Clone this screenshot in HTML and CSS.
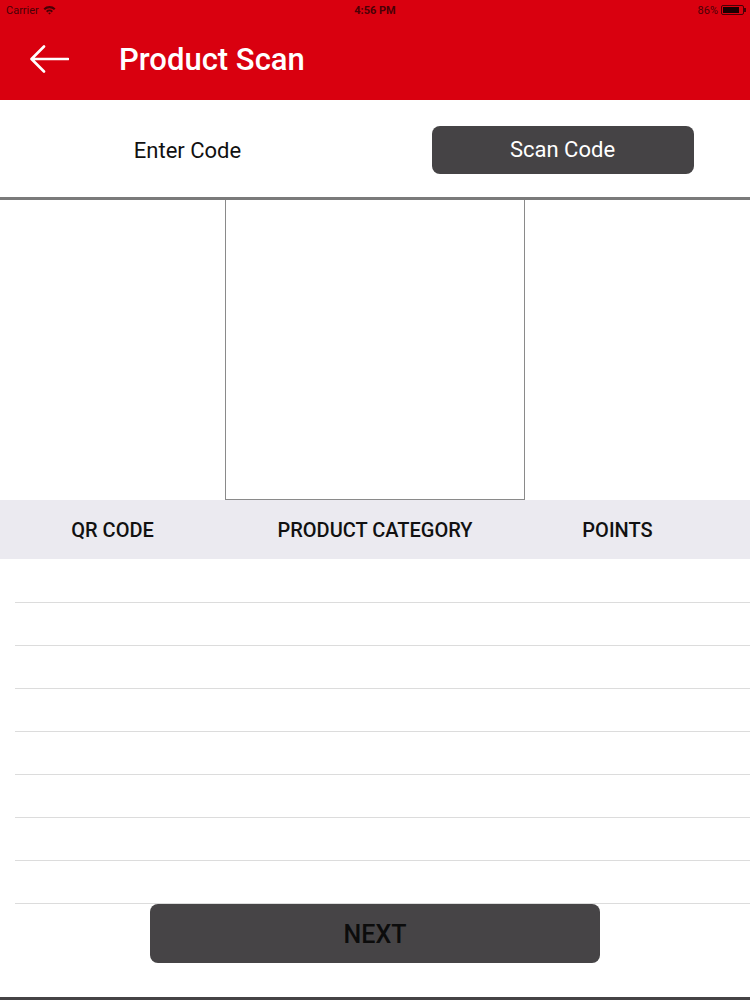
FILE: index.html
```html
<!DOCTYPE html>
<html lang="en">
<head>
    <meta charset="UTF-8">
    <meta name="viewport" content="width=device-width, initial-scale=1.0">
    <title>Product Scan</title>
    <link rel="stylesheet" href="styles.css">
</head>
<body>
    <div class="screen">
        <div class="status-bar">
            <div class="carrier">Carrier
                <svg width="13" height="10" viewBox="0 0 13 10">
                    <path d="M0.5 3.5 A8.5 8.5 0 0 1 12.5 3.5 L11 5 A6.4 6.4 0 0 0 2 5 Z" fill="#4a0006"/>
                    <path d="M3 6 A5 5 0 0 1 10 6 L8.6 7.4 A3 3 0 0 0 4.4 7.4 Z" fill="#4a0006"/>
                    <path d="M5.2 8.2 A1.8 1.8 0 0 1 7.8 8.2 L6.5 9.6 Z" fill="#4a0006"/>
                </svg>
            </div>
            <div class="time">4:56 PM</div>
            <div class="battery">86%
                <span class="battery-icon"><span class="battery-level"></span></span>
            </div>
        </div>

        <div class="navbar">
            <button class="back" aria-label="Back">
                <svg width="40" height="30" viewBox="0 0 40 30">
                    <path d="M39 15 H3 M15 2.5 L2.5 15 L15 27.5" fill="none" stroke="#fff" stroke-width="2.6" stroke-linecap="round" stroke-linejoin="round"/>
                </svg>
            </button>
            <h1>Product Scan</h1>
        </div>

        <div class="segment">
            <div class="segment-item">Enter Code</div>
            <div class="segment-item"><span class="segment-active">Scan Code</span></div>
        </div>

        <div class="scanner-area">
            <div class="scanner"></div>
        </div>

        <div class="table-head">
            <div>QR CODE</div>
            <div>PRODUCT CATEGORY</div>
            <div>POINTS</div>
        </div>

        <div class="rows">
            <div class="row"></div>
            <div class="row"></div>
            <div class="row"></div>
            <div class="row"></div>
            <div class="row"></div>
            <div class="row"></div>
            <div class="row"></div>
            <div class="row"></div>
        </div>

        <div class="footer">
            <button class="next">NEXT</button>
        </div>
    </div>
</body>
</html>
```

FILE: styles.css
```css
* { box-sizing: border-box; }
body {
    margin: 0;
    font-family: Roboto, "Liberation Sans", sans-serif;
    background: #fff;
}
.screen {
    width: 750px;
    height: 1000px;
    display: flex;
    flex-direction: column;
}
.status-bar {
    height: 20px;
    background: #d9000f;
    color: #4a0006;
    font-size: 11px;
    display: grid;
    grid-template-columns: 1fr auto 1fr;
    align-items: center;
    padding: 0 6px;
}
.carrier {
    display: flex;
    align-items: center;
    gap: 4px;
}
.time { font-weight: 700; }
.battery {
    display: flex;
    align-items: center;
    justify-content: flex-end;
    gap: 3px;
}
.battery-icon {
    width: 23px;
    height: 10px;
    border: 1px solid #4a0006;
    border-radius: 2px;
    padding: 1px;
    display: flex;
    position: relative;
}
.battery-icon::after {
    content: "";
    position: absolute;
    right: -3px;
    top: 2px;
    width: 2px;
    height: 4px;
    background: #4a0006;
}
.battery-level {
    width: 86%;
    background: #1a0002;
}
.navbar {
    height: 80px;
    background: #d9000f;
    display: flex;
    align-items: center;
    padding-left: 28px;
}
.back {
    background: none;
    border: none;
    padding: 0;
    width: 42px;
    height: 30px;
    margin-top: -2px;
}
.navbar h1 {
    margin: 0 0 2px 49px;
    color: #fff;
    font-size: 31px;
    font-weight: 500;
}
.segment {
    height: 100px;
    padding-top: 3px;
    display: grid;
    grid-template-columns: 375px 375px;
    align-items: center;
    border-bottom: 3px solid #7a7a7a;
    font-size: 22px;
    color: #111;
}
.segment-item {
    text-align: center;
}
.segment-active {
    display: inline-block;
    width: 262px;
    height: 48px;
    line-height: 48px;
    background: #454345;
    color: #fff;
    border-radius: 8px;
}
.scanner-area {
    height: 300px;
    display: flex;
    justify-content: center;
}
.scanner {
    width: 300px;
    height: 300px;
    border: 1px solid #8a8a8a;
    border-top: none;
    margin-right: 1px;
}
.table-head {
    height: 59px;
    background: #ebeaf0;
    display: grid;
    grid-template-columns: 225px 300px 1fr;
    padding-right: 40px;
    align-items: center;
    text-align: center;
    font-size: 20px;
    font-weight: 500;
    color: #111;
}
.rows {
    padding-left: 15px;
    padding-top: 1px;
}
.row {
    height: 43px;
    border-bottom: 1px solid #dcdcdc;
}
.footer {
    flex: 1;
    display: flex;
    justify-content: center;
    align-items: flex-start;
    border-bottom: 3px solid #454345;
}
.next {
    width: 450px;
    height: 59px;
    background: #464446;
    border: none;
    border-radius: 8px;
    font-family: Roboto, "Liberation Sans", sans-serif;
    font-size: 25px;
    font-weight: 500;
    color: #0c0c0c;
    padding: 2px 0 0;
}
```
